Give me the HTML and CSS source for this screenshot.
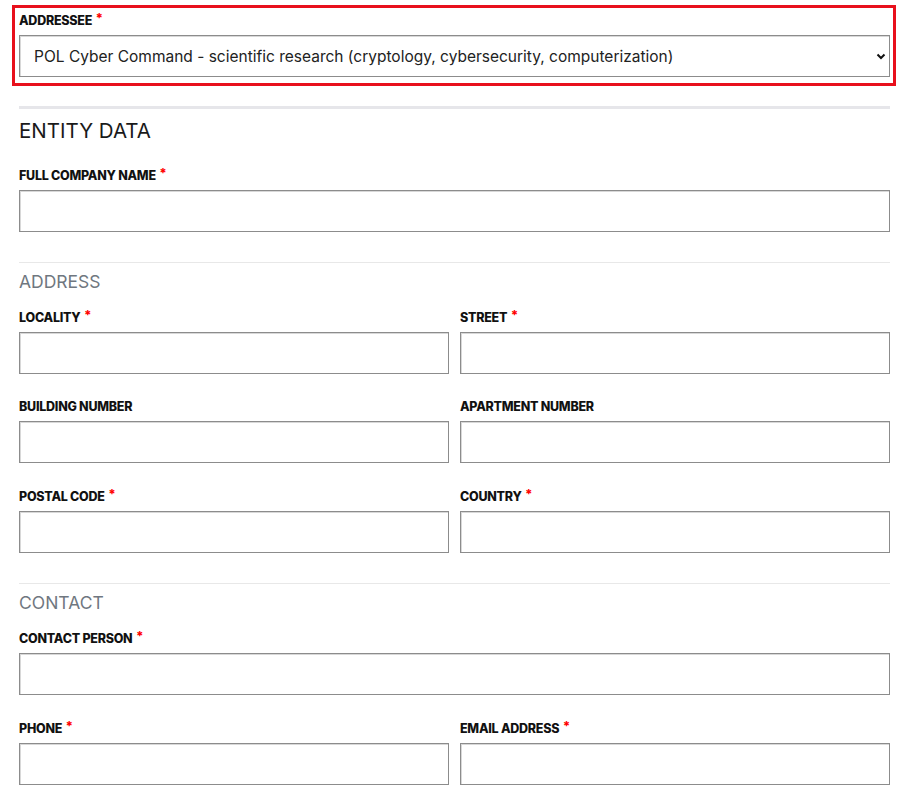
FILE: index.html
```html
<!DOCTYPE html>
<html lang="en">
<head>
<meta charset="utf-8">
<title>Form</title>
<link rel="stylesheet" href="styles.css">
</head>
<body>
<div class="page">
  <div class="highlight">
    <label class="lbl">ADDRESSEE <span class="req">*</span></label>
    <div class="select-wrap">
      <select class="ctrl select">
        <option>POL Cyber Command - scientific research (cryptology, cybersecurity, computerization)</option>
      </select>
      <svg class="chev" width="10" height="7" viewBox="0 0 10 7"><path d="M1.5 1.5 L5 5 L8.5 1.5" fill="none" stroke="#111" stroke-width="2"/></svg>
    </div>
  </div>

  <div class="form">
    <hr class="thick">
    <h2 class="title">ENTITY DATA</h2>

    <div class="field top">
      <label class="lbl">FULL COMPANY NAME <span class="req">*</span></label>
      <input class="ctrl" type="text">
    </div>

    <hr class="thin">
    <h3 class="sub">ADDRESS</h3>

    <div class="row first">
      <div class="field">
        <label class="lbl">LOCALITY <span class="req">*</span></label>
        <input class="ctrl" type="text">
      </div>
      <div class="field">
        <label class="lbl">STREET <span class="req">*</span></label>
        <input class="ctrl" type="text">
      </div>
    </div>
    <div class="row">
      <div class="field">
        <label class="lbl">BUILDING NUMBER</label>
        <input class="ctrl" type="text">
      </div>
      <div class="field">
        <label class="lbl">APARTMENT NUMBER</label>
        <input class="ctrl" type="text">
      </div>
    </div>
    <div class="row">
      <div class="field">
        <label class="lbl">POSTAL CODE <span class="req">*</span></label>
        <input class="ctrl" type="text">
      </div>
      <div class="field">
        <label class="lbl">COUNTRY <span class="req">*</span></label>
        <input class="ctrl" type="text">
      </div>
    </div>

    <hr class="thin">
    <h3 class="sub">CONTACT</h3>

    <div class="field first">
      <label class="lbl">CONTACT PERSON <span class="req">*</span></label>
      <input class="ctrl" type="text">
    </div>
    <div class="row">
      <div class="field">
        <label class="lbl">PHONE <span class="req">*</span></label>
        <input class="ctrl" type="text">
      </div>
      <div class="field">
        <label class="lbl">EMAIL ADDRESS <span class="req">*</span></label>
        <input class="ctrl" type="text">
      </div>
    </div>
  </div>
</div>
</body>
</html>
```

FILE: styles.css
```css
* { box-sizing: border-box; }
html, body { margin: 0; padding: 0; background: #fff; }
body { font-family: "Inter", "Open Sans", sans-serif; color: #111; }

.page { padding: 5px 4px 0 12px; }

.highlight {
  border: 3px solid #e8101c;
  padding: 3px 3px 6px 4px;
}

.lbl {
  display: block;
  font-size: 12.5px;
  font-weight: 800;
  line-height: 18px;
  letter-spacing: -0.25px;
  color: #111;
  margin-bottom: 5px;
}
.req { color: #f00; font-size: 13px; margin-left: 1px; position: relative; top: -2px; }

.select-wrap { position: relative; }
.ctrl {
  display: block;
  width: 100%;
  height: 42px;
  border: 1px solid #8c8c8c;
  box-shadow: inset 1px 1px 0 #d8d8d8;
  background: #fff;
  border-radius: 0;
  margin: 0;
  font-family: inherit;
  outline: none;
}
.select {
  -webkit-appearance: none;
  appearance: none;
  font-size: 15.5px;
  color: #222;
  padding: 0 30px 0 14px;
}
.chev { position: absolute; right: 4px; top: 18px; }

.form { padding: 0 6px 0 7px; }

.thick { border: 0; height: 3px; background: #e6e6ea; margin: 20px 0 0; }
.thin { border: 0; height: 1px; background: #e8e8e8; margin: 30px 0 0; }

.title {
  margin: 8px 0 0;
  font-size: 20.5px;
  line-height: 28px;
  font-weight: 400;
  color: #1a1a1a;
}
.sub {
  margin: 7px 0 0;
  font-size: 17.5px;
  line-height: 24px;
  font-weight: 400;
  color: #6f7780;
}

.field.top { margin-top: 21px; }
.field.first, .row.first { margin-top: 14px; }

.row {
  display: grid;
  grid-template-columns: 1fr 1fr;
  column-gap: 11px;
  margin-top: 24px;
}
```
